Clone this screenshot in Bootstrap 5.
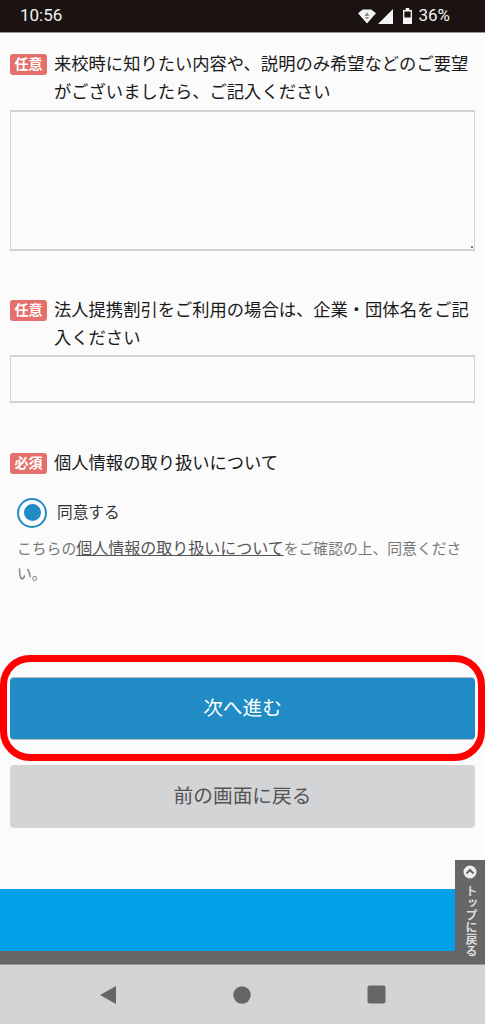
<!DOCTYPE html>
<html lang="ja">
<head>
<meta charset="utf-8">
<title>フォーム</title>
<link rel="stylesheet" href="https://cdn.jsdelivr.net/npm/bootstrap@5.3.0/dist/css/bootstrap.min.css">
<style>
html,body{height:1024px;overflow:hidden}
body{background:#fbfbfc;font-family:"Roboto","Noto Sans CJK JP",sans-serif;color:#222;position:relative}
.shot{height:1024px}
.sbar{height:33px;background:#1a1311;border-bottom:1px solid #999;color:#f2f2f2;padding:0 35px 0 20px;font-size:17px;flex:none}
.sbar-right{gap:2px}
.page{padding:0 10px;flex:1 1 auto;min-height:0}
.qhead{font-size:17.3px;line-height:27.5px;font-weight:400;color:#1a1a1a;gap:7px}
.tagm{flex:none;width:37px;height:21px;background:#e56f6a;color:#fff;border-radius:3px;font-size:14px;font-weight:700;line-height:21px;text-align:center;margin-top:3px}
.fieldbox{border:1px solid #d2d2d2;border-width:2px 1px;background:#fbfbfc;border-radius:0;padding:0;display:block;width:100%}
.q1{padding-top:18px}
.ta1{height:141px;margin-top:4px;resize:none;background:linear-gradient(#777,#777) no-repeat right 1px bottom 1px/2px 2px #fbfbfc}
.q2{padding-top:46px}
.in2{height:48px;margin-top:3px}
.q3{padding-top:47px}
.agree{margin-top:20px;padding-left:7px;gap:10px;font-size:15.7px;color:#333;line-height:30px}
.radio-o{width:30px;height:30px;border:2px solid #208bc4;border-radius:50%;background:#fff;flex:none}
.radio-i{width:17px;height:17px;border-radius:50%;background:#208bc4}
.note{font-size:14.8px;line-height:25px;color:#777;margin:8px 0 0;padding:0 6px 0 7px}
.note a{color:#555;font-size:16px}
.btn-next,.btn-back{display:block;width:100%;height:63px;border:0;border-radius:4px;font-size:19.7px;line-height:61px;padding:0;text-align:center}
.btn-next{background:#208bc4;color:#fff;margin-top:90px;border-top:1px solid #bbb;border-bottom:1px solid #bbb}
.btn-back{background:#d3d4d6;color:#555;margin-top:25px}
.ring{position:absolute;left:0;top:655px;width:485px;height:106px;border:7px solid #f00;border-radius:30px;pointer-events:none}
.bot{height:75px;flex:none;background:#666;position:relative}
.bluefoot{height:62px;width:455px;background:#00a1e9}
.totop{position:absolute;right:0;top:860px;width:30px;height:104px;background:#666;color:#ddd;font-size:12px;font-weight:700;padding-top:5px}
.totop span{writing-mode:vertical-rl;letter-spacing:0;line-height:14px;margin-top:6px}
.navb{height:60px;flex:none;background:#d3d4d6;border-top:1px solid #999;padding:0 99px}
</style>
</head>
<body>
<div class="shot d-flex flex-column">
  <div class="sbar d-flex justify-content-between align-items-center">
    <span>10:56</span>
    <span class="sbar-right d-flex align-items-center">
      <svg width="18" height="15" viewBox="0 0 19 15" aria-hidden="true"><path d="M0 4 5 0h9l5 4-9.500 11z" fill="#f4f4f4"/><path d="M9.500 3 7 7h5zM7 8h5l-2.500 2.500z" fill="#888"/></svg>
      <svg width="15" height="15" viewBox="0 0 15 15" aria-hidden="true"><path d="M15 0v15H0z" fill="#f4f4f4"/></svg>
      <svg class="ms-2" width="9" height="16" viewBox="0 0 10 16" preserveAspectRatio="none" aria-hidden="true"><path d="M3 0h4v2h3v14H0V2h3z" fill="#f4f4f4"/><rect x="1.500" y="3.500" width="7" height="6" fill="#1a1311"/></svg>
      <span class="ms-1">36%</span>
    </span>
  </div>

  <div class="page">
    <div class="q1">
      <div class="qhead d-flex"><span class="tagm">任意</span><span>来校時に知りたい内容や、説明のみ希望などのご要望がございましたら、ご記入ください</span></div>
      <textarea class="form-control fieldbox ta1" aria-label="ご要望"></textarea>
    </div>
    <div class="q2">
      <div class="qhead d-flex"><span class="tagm">任意</span><span>法人提携割引をご利用の場合は、企業・団体名をご記入ください</span></div>
      <input class="form-control fieldbox in2" type="text" aria-label="企業・団体名">
    </div>
    <div class="q3">
      <div class="qhead d-flex"><span class="tagm">必須</span><span>個人情報の取り扱いについて</span></div>
      <div class="agree d-flex align-items-center">
        <span class="radio-o d-flex align-items-center justify-content-center"><span class="radio-i"></span></span>
        <span>同意する</span>
      </div>
      <p class="note">こちらの<a href="#">個人情報の取り扱いについて</a>をご確認の上、同意ください。</p>
    </div>
    <button class="btn-next" type="button">次へ進む</button>
    <button class="btn-back" type="button">前の画面に戻る</button>
  </div>

  <div class="bot"><div class="bluefoot"></div></div>
  <div class="navb d-flex justify-content-between align-items-center">
    <svg width="18" height="20" viewBox="0 0 18 20" aria-hidden="true"><path d="M17 1v18L1 10z" fill="#666"/></svg>
    <svg width="18" height="18" viewBox="0 0 18 18" aria-hidden="true"><circle cx="9" cy="9" r="8.700" fill="#666"/></svg>
    <svg width="19" height="19" viewBox="0 0 19 19" aria-hidden="true"><rect x=".5" y=".5" width="18" height="18" rx="2" fill="#666"/></svg>
  </div>
</div>
<div class="ring"></div>
<div class="totop d-flex flex-column align-items-center">
  <svg width="14" height="14" viewBox="0 0 14 14" aria-hidden="true"><circle cx="7" cy="7" r="6.500" fill="#eee"/><path d="M3.500 8.500 7 5l3.500 3.500" fill="none" stroke="#666" stroke-width="2"/></svg>
  <span>トップに戻る</span>
</div>
</body>
</html>
